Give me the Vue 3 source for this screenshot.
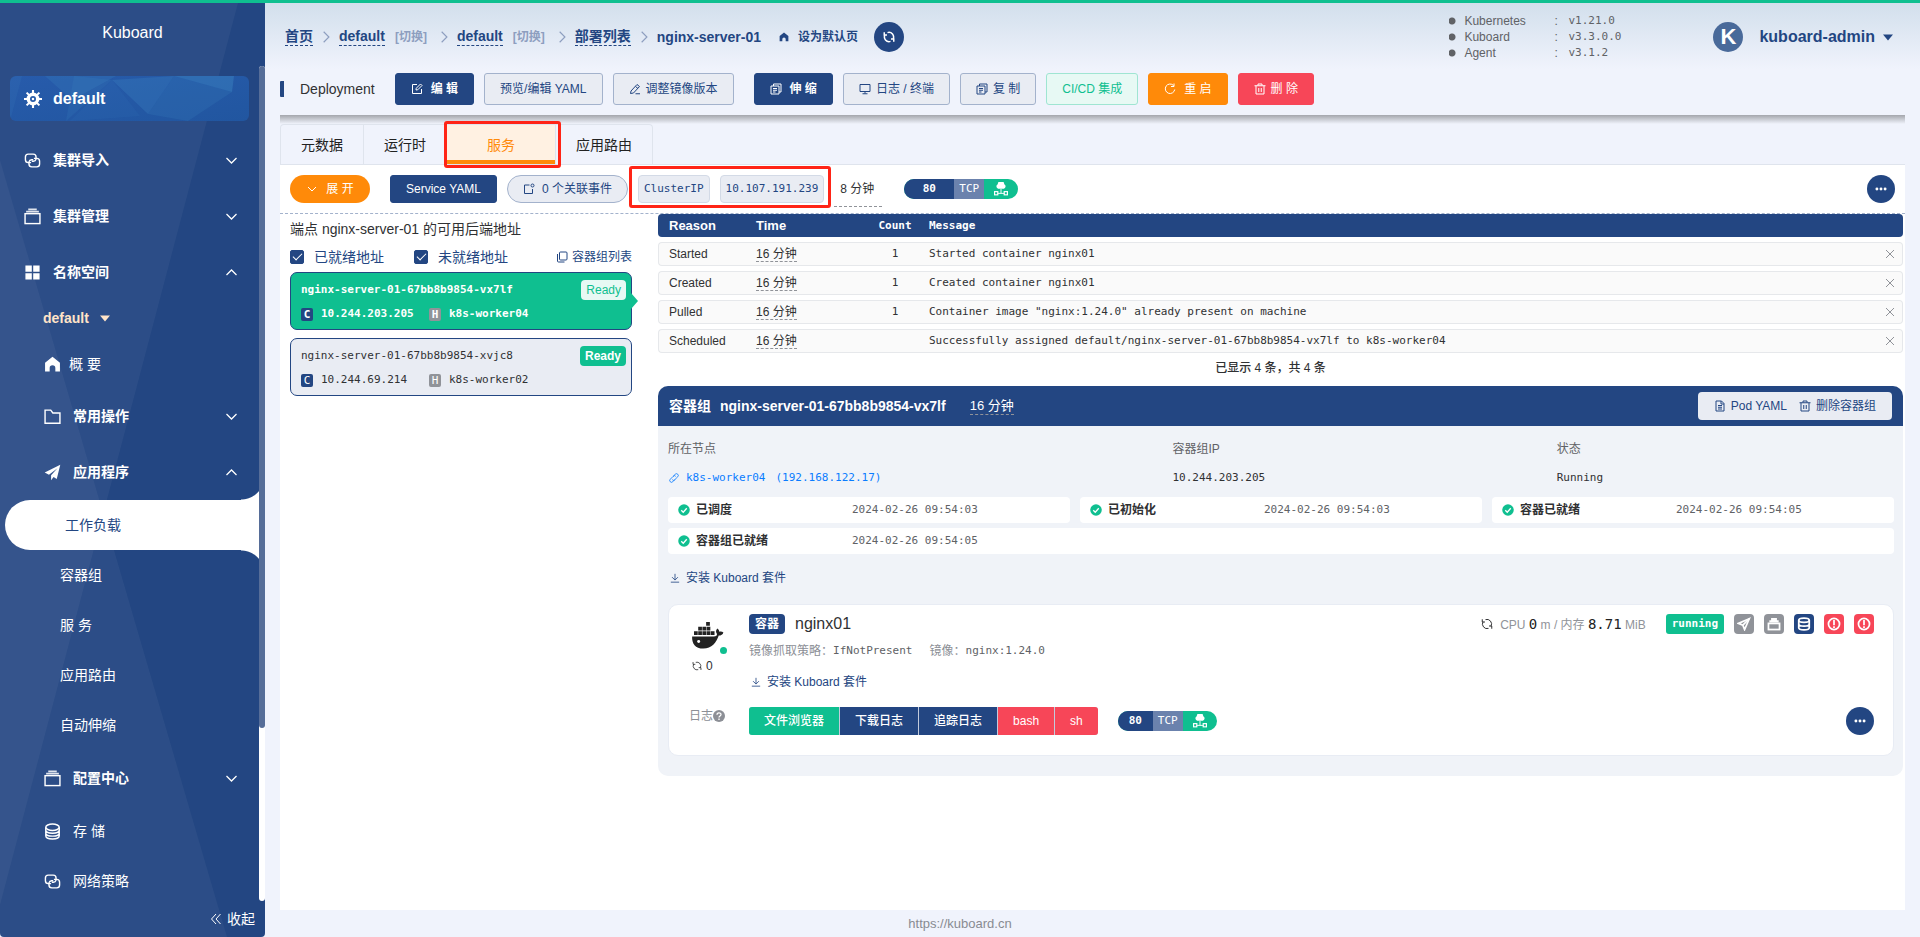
<script setup>
import { h, ref } from 'vue'

const shapes = {
  down: '<path d="M4 8l8 8 8-8"/>',
  up: '<path d="M4 16l8-8 8 8"/>',
  right: '<path d="M8 3l9 9-9 9"/>',
  caret: '<path d="M2 7h20L12 19z" fill="currentColor" stroke="none"/>',
  collapse: '<path d="M12 2L3 12l9 10M21 2l-9 10 9 10"/>',
  helm: '<circle cx="12" cy="12" r="6.300" stroke-width="4.600"/><circle cx="12" cy="12" r="1.700" fill="currentColor" stroke="none"/><path d="M12 0v4M12 20v4M0 12h4M20 12h4M3.500 3.500l3 3M17.500 17.500l3 3M3.500 20.500l3-3M17.500 6.500l3-3" stroke-width="2.800"/>',
  link2: '<path d="M10 15H6a4 4 0 0 1-4-4V7a4 4 0 0 1 4-4h7a4 4 0 0 1 4 4v3a4 4 0 0 1-4 3h-2"/><path d="M14 9h4a4 4 0 0 1 4 4v4a4 4 0 0 1-4 4h-7a4 4 0 0 1-4-4v-3a4 4 0 0 1 4-3h2"/>',
  stack: '<rect x="1.500" y="8" width="21" height="14"/><path d="M3 5.200h18M6 2h12" stroke-width="2.400" opacity=".85"/>',
  grid: '<path d="M2 2h9v9H2zM13 2h9v9h-9zM2 13h9v9H2zM13 13h9v9h-9z" fill="currentColor" stroke="none"/>',
  home: '<path d="M12 1L1.500 9.500V22H8v-5a4 4 0 0 1 8 0v5h6.500V9.500z" fill="currentColor" stroke="none"/>',
  folder: '<path d="M1.500 3h8l3 4h10v14.500h-21z"/>',
  plane: '<path d="M23 1L1 12l6 3L19 6 10 16v7l3.500-4.500L18 21z" fill="currentColor" stroke="none"/>',
  db: '<ellipse cx="12" cy="6" rx="9.500" ry="4.500"/><path d="M2.500 6v12c0 6 19 6 19 0V6M2.500 10c0 6 19 6 19 0M2.500 14c0 6 19 6 19 0"/>',
  dbSmall: '<ellipse cx="12" cy="5.500" rx="9" ry="3.500"/><path d="M3 5.500v13c0 5 18 5 18 0v-13M3 12c0 5 18 5 18 0"/>',
  refresh: '<path d="M9 3.200A9.300 9.300 0 0 1 20 16.500M15 20.800A9.300 9.300 0 0 1 4 7.500M2.500 2.500v5.500h5.500M21.500 21.500V16H16"/>',
  edit: '<path d="M12 3H3v18h18v-9M10 14l.5-3.500L19 2l3 3-8.500 8.500z"/>',
  pen: '<path d="M4 16L16 3l5 4L9 20l-6 1zM13 21.500h9M13 7l5 4"/>',
  copydoc: '<path d="M7 6V2h15v16h-4M2 6h16v16H2zM6 11h8M6 14.500h8M6 18h5"/>',
  monitor: '<path d="M2 3h20v14H2zM12 17v4M7 21.500h10"/>',
  restart: '<path d="M19 5a9.500 9.500 0 1 0 2.500 8M20 1v6h-6"/>',
  trash: '<path d="M1 5.500h22M4 5.500V22h16V5.500M8 5V2h8v3M9.500 10v8M14.500 10v8"/>',
  event: '<path d="M13 4H3v17h16v-9"/><circle cx="19" cy="5" r="3"/>',
  copy: '<rect x="7" y="2" width="15" height="16" rx="2"/><path d="M3 6v14a2 2 0 0 0 2 2h12"/>',
  doc: '<path d="M4 2h11l5 5v15H4zM14 2v6h6M8 11h8M8 14.500h8M8 18h8"/>',
  chain: '<path d="M10 8l5-5a4 4 0 0 1 6 6l-7 7a4 4 0 0 1-6 0M14 16l-5 5a4 4 0 0 1-6-6l7-7a4 4 0 0 1 6 0"/>',
  check: '<circle cx="12" cy="12" r="11.500" fill="#0fbf90" stroke="none"/><path d="M6.500 12.500l4 4 7-8" stroke="#fff" stroke-width="2.600"/>',
  download: '<path d="M12 2v14M5 10l7 7 7-7M2 22h20"/>',
  dots: '<path d="M5 12h.01M12 12h.01M19 12h.01" stroke-width="5" stroke-linecap="round"/>',
  close: '<path d="M4 4l16 16M20 4L4 20"/>',
  warn: '<circle cx="12" cy="12" r="9.500"/><path d="M12 5v9M12 16v3" stroke-width="3"/>',
  send: '<path d="M21 3L2.500 11l7.500 3 3 7.500z" fill="none"/><path d="M21 3L10 14"/>',
  box: '<rect x="2.500" y="11" width="19" height="10.500"/><path d="M4 7.500h16M7 3.500h10" stroke-width="4"/>',
  cloud: '<path d="M7 11.500a4 4 0 0 1-.5-7.500 5.500 5.500 0 0 1 11 0 4 4 0 0 1-.5 7.500z" fill="currentColor" stroke="none"/><path d="M12 12v7.500M6 19.500h12" stroke-width="1.600"/><rect x="1" y="16.500" width="5.500" height="5.500"/><rect x="17.500" y="16.500" width="5.500" height="5.500"/>',
  help: '<circle cx="12" cy="12" r="12" fill="currentColor" stroke="none"/><path d="M8 9.500c0-5 8-5 8-.5 0 3-4 3-4 6M12 17v3" stroke="#fff" stroke-width="2.600"/>',
}
const Icon = (p) =>
  h('svg', { viewBox: '0 0 24 24', class: 'icon', fill: 'none', stroke: 'currentColor', 'stroke-width': 2, 'aria-hidden': 'true', innerHTML: shapes[p.name] })
Icon.props = ['name']

const topMenu = [
  { icon: 'link2', label: '集群导入', arrow: 'down' },
  { icon: 'stack', label: '集群管理', arrow: 'down' },
  { icon: 'grid', label: '名称空间', arrow: 'up' },
]
const workloads = ['工作负载', '容器组', '服 务', '应用路由', '自动伸缩']
const versions = [
  ['Kubernetes', 'v1.21.0'],
  ['Kuboard', 'v3.3.0.0'],
  ['Agent', 'v3.1.2'],
]
const tabs = ['元数据', '运行时', '服务', '应用路由']
const activeTab = ref('服务')
const showReady = ref(true)
const showNotReady = ref(true)
const endpoints = [
  { name: 'nginx-server-01-67bb8b9854-vx7lf', ip: '10.244.203.205', host: 'k8s-worker04' },
  { name: 'nginx-server-01-67bb8b9854-xvjc8', ip: '10.244.69.214', host: 'k8s-worker02' },
]
const selected = ref(0)
const events = [
  { reason: 'Started', time: '16 分钟', count: '1', message: 'Started container nginx01' },
  { reason: 'Created', time: '16 分钟', count: '1', message: 'Created container nginx01' },
  { reason: 'Pulled', time: '16 分钟', count: '1', message: 'Container image "nginx:1.24.0" already present on machine' },
  { reason: 'Scheduled', time: '16 分钟', count: '', message: 'Successfully assigned default/nginx-server-01-67bb8b9854-vx7lf to k8s-worker04' },
]
const conditions = [
  ['已调度', '2024-02-26 09:54:03'],
  ['已初始化', '2024-02-26 09:54:03'],
  ['容器已就绪', '2024-02-26 09:54:05'],
  ['容器组已就绪', '2024-02-26 09:54:05'],
]
</script>

<template>
  <div class="page">
    <aside class="sidebar">
      <svg class="facets" viewBox="0 0 265 934" preserveAspectRatio="none" aria-hidden="true">
        <path d="M0 0H238L0 902Z" fill="#fff" fill-opacity=".045" />
        <path d="M0 157L227 934H0Z" fill="#fff" fill-opacity=".045" />
      </svg>
      <div class="brand">Kuboard</div>
      <div class="menu-wrap">
        <nav class="menu">
          <a class="cluster" href="#">
            <svg class="cluster-bg" viewBox="0 0 239 45" preserveAspectRatio="none" aria-hidden="true">
              <g fill="#4a9ad0">
                <path d="M35 0L62 24L106 0Z" fill-opacity=".16" />
                <path d="M64 0L56 45L102 4Z" fill-opacity=".12" />
                <path d="M102 4L138 38L164 0Z" fill-opacity=".2" />
                <path d="M164 0L222 16L224 0Z" fill-opacity=".3" />
                <path d="M164 0L138 38L178 45L222 16Z" fill-opacity=".14" />
                <path d="M102 4L130 40L60 45Z" fill-opacity=".07" />
                <path d="M0 45L12 0H0Z" fill-opacity=".1" />
              </g>
            </svg>
            <Icon name="helm" class="i18" /><span>default</span>
          </a>
          <button v-for="m in topMenu" :key="m.label" class="item group" type="button">
            <Icon :name="m.icon" class="i17" /><span>{{ m.label }}</span><Icon :name="m.arrow" class="arrow" />
          </button>
          <button class="namespace" type="button">default <Icon name="caret" class="i12" /></button>
          <a class="item sub home" href="#"><Icon name="home" class="i17" /><span>概 要</span></a>
          <button class="item sub group" type="button"><Icon name="folder" class="i17" /><span>常用操作</span><Icon name="down" class="arrow" /></button>
          <button class="item sub group" type="button"><Icon name="plane" class="i17" /><span>应用程序</span><Icon name="up" class="arrow" /></button>
          <a v-for="(w, i) in workloads" :key="w" class="leaf" :class="{ active: i === 0 }" href="#">{{ w }}</a>
          <button class="item sub group" type="button"><Icon name="stack" class="i17" /><span>配置中心</span><Icon name="down" class="arrow" /></button>
          <a class="item sub plain" href="#"><Icon name="db" class="i17" /><span>存 储</span></a>
          <a class="item sub plain" href="#"><Icon name="link2" class="i17" /><span>网络策略</span></a>
        </nav>
        <div class="track"><div class="thumb"></div></div>
      </div>
      <button class="fold" type="button"><Icon name="collapse" class="i12" />收起</button>
    </aside>

    <main class="main">
      <header class="header">
        <nav class="crumbs">
          <a href="#">首页</a><Icon name="right" class="sep" />
          <a href="#">default</a><button class="switch" type="button">[切换]</button><Icon name="right" class="sep" />
          <a href="#">default</a><button class="switch" type="button">[切换]</button><Icon name="right" class="sep" />
          <a href="#">部署列表</a><Icon name="right" class="sep" />
          <strong>nginx-server-01</strong>
          <button class="set-home" type="button"><Icon name="home" class="i10" />设为默认页</button>
          <button class="round large" type="button" aria-label="刷新"><Icon name="refresh" class="i12 heavy" /></button>
        </nav>
        <ul class="versions">
          <li v-for="v in versions" :key="v[0]"><span class="vname">{{ v[0] }}</span><span class="colon">:</span><span class="mono">{{ v[1] }}</span></li>
        </ul>
        <button class="user" type="button"><span class="avatar">K</span>kuboard-admin<Icon name="caret" class="i12" /></button>
      </header>

      <section class="toolbar">
        <h1>Deployment</h1>
        <button class="btn primary wide" type="button"><Icon name="edit" />编 辑</button>
        <button class="btn" type="button">预览/编辑 YAML</button>
        <button class="btn" type="button"><Icon name="pen" />调整镜像版本</button>
        <button class="btn primary wide apart" type="button"><Icon name="copydoc" />伸 缩</button>
        <button class="btn" type="button"><Icon name="monitor" />日志 / 终端</button>
        <button class="btn" type="button"><Icon name="copydoc" />复 制</button>
        <button class="btn success" type="button">CI/CD 集成</button>
        <button class="btn warning wide" type="button"><Icon name="restart" />重 启</button>
        <button class="btn danger" type="button"><Icon name="trash" />删 除</button>
      </section>
      <div class="shade"></div>

      <div class="tabs" role="tablist">
        <div v-for="t in tabs" :key="t" class="tab-cell">
          <button class="tab" :class="{ on: t === activeTab }" type="button" role="tab" :aria-selected="t === activeTab" @click="activeTab = t">{{ t }}</button>
          <span v-if="t === '服务'" class="mark tab-mark"></span>
        </div>
      </div>

      <section class="content">
        <div class="service">
          <button class="expand" type="button"><Icon name="down" />展 开</button>
          <button class="btn primary yaml" type="button">Service YAML</button>
          <button class="btn events-btn" type="button"><Icon name="event" />0 个关联事件</button>
          <div class="tags">
            <span class="tag">ClusterIP</span><span class="tag">10.107.191.239</span>
            <span class="mark tags-mark"></span>
          </div>
          <span class="age">8 分钟</span>
          <div class="pill wide-pill"><b>80</b><span>TCP</span><i><Icon name="cloud" class="i14" /></i></div>
          <button class="round more" type="button" aria-label="更多"><Icon name="dots" class="i14" /></button>
        </div>

        <div class="columns">
          <div class="backends">
            <h2>端点 nginx-server-01 的可用后端地址</h2>
            <div class="filters">
              <label><input v-model="showReady" type="checkbox" />已就绪地址</label>
              <label><input v-model="showNotReady" type="checkbox" />未就绪地址</label>
              <a href="#"><Icon name="copy" class="i12" />容器组列表</a>
            </div>
            <article v-for="(e, i) in endpoints" :key="e.name" class="endpoint" :class="{ chosen: i === selected }" @click="selected = i">
              <div class="ep-row"><span>{{ e.name }}</span><span class="ready">Ready</span></div>
              <div class="ep-row ep-info"><em>C</em><span class="ip">{{ e.ip }}</span><em class="gray">H</em><span>{{ e.host }}</span></div>
            </article>
          </div>

          <div class="detail">
            <table class="events">
              <colgroup><col class="c1" /><col class="c2" /><col class="c3" /><col /><col class="c5" /></colgroup>
              <thead>
                <tr><th>Reason</th><th>Time</th><th class="mono num">Count</th><th class="mono">Message</th><th></th></tr>
              </thead>
              <tbody>
                <tr v-for="e in events" :key="e.reason">
                  <td>{{ e.reason }}</td>
                  <td><span class="dashed">{{ e.time }}</span></td>
                  <td class="mono num">{{ e.count }}</td>
                  <td class="mono">{{ e.message }}</td>
                  <td><button class="x" type="button" aria-label="关闭"><Icon name="close" class="i12" /></button></td>
                </tr>
              </tbody>
            </table>
            <p class="total">已显示 4 条，共 4 条</p>

            <section class="pod">
              <header class="pod-head">
                <b>容器组</b><b>nginx-server-01-67bb8b9854-vx7lf</b><span class="dashed">16 分钟</span>
                <div class="pod-actions">
                  <button type="button"><Icon name="doc" />Pod YAML</button>
                  <button type="button"><Icon name="trash" />删除容器组</button>
                </div>
              </header>
              <div class="pod-body">
                <dl class="facts">
                  <div><dt>所在节点</dt><dd><a href="#"><Icon name="chain" class="i10" /><span>k8s-worker04</span><span>(192.168.122.17)</span></a></dd></div>
                  <div><dt>容器组IP</dt><dd>10.244.203.205</dd></div>
                  <div><dt>状态</dt><dd>Running</dd></div>
                </dl>
                <ul class="conditions">
                  <li v-for="c in conditions" :key="c[0]"><Icon name="check" /><b>{{ c[0] }}</b><span class="mono">{{ c[1] }}</span></li>
                </ul>
                <a class="install" href="#"><Icon name="download" class="i10" />安装 Kuboard 套件</a>

                <article class="container">
                  <div class="gutter">
                    <div class="docker">
                      <svg viewBox="0 0 34 30" fill="#222" aria-hidden="true">
                        <path d="M15 0h4v4h-4zM6.500 5h4v4h-4zM11 5h4v4h-4zM15.500 5h4v4h-4zM2 10h4v4H2zM6.500 10h4v4h-4zM11 10h4v4h-4zM15.500 10h4v4h-4zM20 10h4v4h-4z" />
                        <path d="M0 15.500h23c3 0 4-1.500 3.500-3-1.500-2-1-4 .5-5.500 1.500 1 2 2 2 3.500 1.500-.4 3.500-.2 4.500.7-.7 2.300-2.500 3.300-5 3.300C26 22 21 28.500 12 28.500 3.500 28.500-.5 23 0 15.500z" />
                        <circle cx="7" cy="21" r="1.600" fill="#fff" />
                      </svg>
                      <span class="dot"></span>
                    </div>
                    <div class="restarts"><Icon name="refresh" class="i10" />0</div>
                    <div class="log-label">日志<Icon name="help" /></div>
                  </div>
                  <div class="body">
                    <div class="title-row">
                      <span class="badge">容器</span><span class="cname">nginx01</span>
                      <div class="usage"><Icon name="refresh" /><span>CPU <b>0</b> m / 内存 <b>8.71</b> MiB</span></div>
                      <span class="running">running</span>
                      <span class="sq"><Icon name="send" /></span>
                      <span class="sq"><Icon name="box" /></span>
                      <span class="sq blue"><Icon name="dbSmall" /></span>
                      <span class="sq red"><Icon name="warn" /></span>
                      <span class="sq red"><Icon name="warn" /></span>
                    </div>
                    <div class="meta"><span>镜像抓取策略：</span><span class="mono val">IfNotPresent</span><span>镜像：</span><span class="mono">nginx:1.24.0</span></div>
                    <a class="install inner" href="#"><Icon name="download" class="i10" />安装 Kuboard 套件</a>
                    <div class="actions">
                      <div class="seg">
                        <button class="green" type="button">文件浏览器</button>
                        <button type="button">下载日志</button>
                        <button type="button">追踪日志</button>
                        <button class="red" type="button">bash</button>
                        <button class="red" type="button">sh</button>
                      </div>
                      <div class="pill"><b>80</b><span>TCP</span><i><Icon name="cloud" class="i14" /></i></div>
                      <button class="round more" type="button" aria-label="更多"><Icon name="dots" class="i14" /></button>
                    </div>
                  </div>
                </article>
              </div>
            </section>
          </div>
        </div>
      </section>
      <footer class="foot"><a href="#">https://kuboard.cn</a></footer>
    </main>
  </div>
</template>

<style>
body { margin: 0; }
</style>

<style scoped>
* { box-sizing: border-box; }
.page {
  display: grid;
  grid-template-columns: 265px minmax(0, 1fr);
  min-height: 100vh;
  border-top: 3px solid #0fbf90;
  background: #f0f3fc;
  color: #303133;
  font: 12px/16px "Liberation Sans", "Noto Sans CJK SC", sans-serif;
}
button { font: inherit; color: inherit; background: none; border: 0; padding: 0; cursor: pointer; white-space: nowrap; }
a { color: inherit; text-decoration: none; }
h1, h2, p, ul, dl, dd { margin: 0; padding: 0; font-weight: normal; }
ul { list-style: none; }
.mono { font-family: "DejaVu Sans Mono", "Noto Sans CJK SC", monospace; font-size: 11px; }
.icon { width: 12px; height: 12px; flex: none; display: block; }
.i10 { width: 10px; height: 10px; }
.i14 { width: 14px; height: 14px; }
.i17 { width: 17px; height: 17px; }
.i18 { width: 18px; height: 18px; }
.heavy { stroke-width: 3; }

.sidebar { position: relative; display: flex; flex-direction: column; height: calc(100vh - 3px); background: #234682; color: #fff; border-radius: 0 0 4px 4px; overflow: hidden; }
.facets { position: absolute; inset: 0; width: 100%; height: 100%; }
.brand { position: relative; height: 63px; line-height: 60px; font-size: 16px; text-align: center; flex: none; }
.menu-wrap { position: relative; flex: 1; min-height: 0; display: flex; }
.menu { flex: 1; overflow: hidden; padding-top: 10px; font-size: 14px; margin-right: -6px; }
.track { width: 6px; background: #fff; border-radius: 3px; position: relative; }
.thumb { height: 79.3%; background: #566d98; border-radius: 3px; }
.cluster { position: relative; display: flex; align-items: center; gap: 11px; height: 45px; margin: 0 16px 11px 10px; padding-left: 14px; border-radius: 6px; overflow: hidden; background: linear-gradient(170deg, #275bab, #2156a0); font-size: 16px; font-weight: bold; }
.cluster-bg { position: absolute; inset: 0; width: 100%; height: 100%; }
.cluster .icon, .cluster span { position: relative; }
.item { display: flex; align-items: center; width: 100%; height: 56px; padding: 0 26px 0 24px; gap: 12px; }
.group { font-weight: bold; }
.item .arrow { margin-left: auto; width: 15px; height: 15px; stroke-width: 2; }
.sub { padding-left: 44px; }
.home { height: 48px; gap: 8px; }
.plain { height: 50px; }
.namespace { display: flex; align-items: center; gap: 10px; height: 36px; margin: 0 0 4px 43px; color: #ffe4c8; font-weight: bold; }
.leaf { display: flex; align-items: center; height: 50px; padding-left: 60px; }
.leaf.active { position: relative; margin-left: 5px; background: #fff; color: #234682; border-radius: 25px 0 0 25px; }
.leaf.active::before, .leaf.active::after { content: ""; position: absolute; right: 0; width: 24px; height: 24px; }
.leaf.active::before { bottom: 100%; background: radial-gradient(circle at 0 0, transparent 23px, #fff 24px); }
.leaf.active::after { top: 100%; background: radial-gradient(circle at 0 100%, transparent 23px, #fff 24px); }
.fold { position: relative; display: flex; align-items: center; justify-content: flex-end; gap: 5px; height: 36px; padding-right: 10px; font-size: 14px; flex: none; }

.main { display: flex; flex-direction: column; min-width: 0; padding: 0 15px; background: linear-gradient(#d2dfec, #f0f3fc 66px); }
.header { display: flex; height: 62px; margin-right: -15px; padding: 0 26px 0 5px; }
.crumbs { display: flex; align-items: center; height: 68px; color: #234682; font-size: 14px; font-weight: bold; white-space: nowrap; }
.crumbs a { border-bottom: 1px dashed #234682; line-height: 17px; }
.sep { width: 14px; height: 14px; margin: 0 6px; color: #8d9ebf; }
.switch { font-size: 12px; color: #8d9ebf; margin: 0 4px 0 10px; }
.set-home { display: flex; align-items: center; gap: 9px; font-size: 12px; margin: 0 16px 0 18px; }
.round { display: grid; place-items: center; width: 28px; height: 28px; border-radius: 50%; background: #234682; color: #fff; flex: none; }
.round.large { width: 30px; height: 30px; }
.more { margin-left: auto; }
.versions { margin: 10px 92px 0 auto; width: 172px; color: #606266; flex: none; }
.versions li { display: flex; align-items: center; height: 16px; padding-left: 15px; background: radial-gradient(circle at 3px 8px, #606266 3px, transparent 4px); }
.vname { flex: none; width: 90px; }
.colon { flex: none; width: 14px; }
.user { display: flex; align-items: center; height: 50px; margin-top: 9px; color: #234682; font-size: 16px; font-weight: bold; gap: 7px; }
.avatar { display: grid; place-items: center; width: 30px; height: 30px; margin-right: 9px; border-radius: 50%; background: #496a9a; color: #fff; font-size: 22px; line-height: 30px; }

.toolbar { display: flex; align-items: center; gap: 10px; height: 50px; padding-bottom: 2px; }
.toolbar h1 { font-size: 14px; line-height: 16px; padding-left: 16px; border-left: 4px solid #234682; margin-right: 10px; border-radius: 1px; }
.btn { display: flex; align-items: center; justify-content: center; gap: 5px; height: 32px; padding: 0 15px; border: 1px solid #a3b2cc; border-radius: 3px; background: #e9ecf3; color: #234682; }
.btn.primary { background: #234682; border-color: #234682; color: #fff; font-weight: bold; }
.btn.wide { gap: 8px; }
.btn.apart { margin-left: 10px; }
.btn.success { background: #e7f9f4; border-color: #9fe5d2; color: #0fbf90; }
.btn.warning { background: #ff8a09; border-color: #ff8a09; color: #fff; }
.btn.danger { background: #f74658; border-color: #f74658; color: #fff; }
.shade { height: 9px; background: linear-gradient(#a4a6ac, #f0f3fc); }

.tabs { display: flex; border-bottom: 1px solid #dfe4ed; }
.tab-cell { position: relative; border: 1px solid #dfe4ed; border-width: 1px 1px 0 0; }
.tab-cell:first-child { border-left-width: 1px; border-radius: 4px 0 0 0; }
.tab-cell:last-child { border-radius: 0 4px 0 0; }
.tab { display: block; height: 39px; padding: 0 20px; font-size: 14px; color: #222; }
.tab.on { padding: 4px 40px 0; background: #fff1e2; color: #ff8a09; border-bottom: 4px solid #ff8a09; }
.mark { position: absolute; border: 3px solid #ff2416; border-radius: 3px; pointer-events: none; z-index: 1; }
.tab-mark { inset: -4px -6px -4px -3px; }
.tags-mark { inset: -9px -7px -5px -9px; }

.content { flex: 1; background: #fff; padding-bottom: 20px; }
.service { display: flex; align-items: center; height: 49px; padding: 0 10px; border-bottom: 1px dashed #a3b2cc; }
.service .yaml { height: 28px; margin: 0 10px 0 20px; font-weight: 500; }
.expand { display: flex; align-items: center; justify-content: center; gap: 8px; width: 80px; height: 28px; border-radius: 14px; background: #ff8a09; color: #fff; }
.events-btn { height: 28px; gap: 7px; border-radius: 14px; margin-right: 10px; }
.tags { position: relative; display: flex; gap: 10px; }
.tag { height: 28px; line-height: 26px; padding: 0 5px; border: 1px solid #d3dae6; border-radius: 4px; background: #e9ecf3; color: #234682; font-family: "DejaVu Sans Mono", monospace; font-size: 11px; }
.age { height: 28px; line-height: 20px; margin: 8px 22px 0 10px; padding: 0 8px 0 6px; border-bottom: 1px dashed #909399; }
.pill { display: flex; height: 20px; line-height: 20px; border-radius: 10px; overflow: hidden; color: #fff; background: #0fbf90; font-family: "DejaVu Sans Mono", monospace; font-size: 11px; text-align: center; }
.pill b { width: 35px; background: #234682; }
.pill span { width: 30px; background: #6b82ad; }
.pill i { display: grid; place-items: center; width: 34px; }
.wide-pill b { width: 50px; }

.columns { display: grid; grid-template-columns: 342px minmax(0, 1fr); gap: 26px; padding: 0 2px 0 10px; }
.backends h2 { font-size: 14px; line-height: 20px; padding: 5px 0 6px; }
.filters { display: flex; align-items: center; height: 24px; margin-bottom: 3px; color: #234682; }
.filters label { display: flex; align-items: center; gap: 10px; font-size: 14px; margin-right: 30px; }
.filters a { display: flex; align-items: center; gap: 4px; margin-left: auto; }
.filters input { appearance: none; width: 14px; height: 14px; margin: 0; border: 1px solid #234682; border-radius: 2px; background: #fff; display: grid; place-items: center; }
.filters input:checked { background: #234682; }
.filters input:checked::before { content: ""; width: 8px; height: 4px; margin-bottom: 3px; border: solid #fff; border-width: 0 0 1px 1px; rotate: -45deg; }
.endpoint { position: relative; height: 58px; margin-bottom: 8px; padding: 6px 5px 0 10px; border: 1px solid #234682; border-radius: 7px; background: #e9ecf3; font-family: "DejaVu Sans Mono", monospace; font-size: 11px; cursor: pointer; }
.ep-row { display: flex; align-items: center; justify-content: space-between; height: 22px; }
.ep-info { justify-content: flex-start; height: 26px; }
.ep-info em { width: 12px; height: 13px; line-height: 13px; border-radius: 2px; background: #234682; color: #fff; font-style: normal; text-align: center; margin-right: 8px; }
.ep-info em.gray { background: #909399; }
.ip { width: 108px; }
.ready { height: 20px; line-height: 20px; padding: 0 5px; border-radius: 4px; background: #0fbf90; color: #fff; font-family: "Liberation Sans", sans-serif; font-size: 12px; font-weight: bold; }
.chosen { background: #0fbf90; color: #fff; font-weight: bold; }
.chosen .ready { background: #e7f9f4; color: #0fbf90; font-weight: normal; }
.chosen::after { content: ""; position: absolute; left: 100%; top: 20px; border: 8px solid transparent; border-left: 7px solid #0fbf90; border-right: 0; }

.events { width: 100%; table-layout: fixed; border-collapse: separate; border-spacing: 0 5px; margin: -5px 0 0; }
.c1 { width: 87px; }
.c2 { width: 127px; }
.c3 { width: 46px; }
.c5 { width: 36px; }
.events th { height: 23px; padding: 0 11px; background: #234682; color: #fff; text-align: left; font-size: 13px; }
.events th.mono { font-size: 11px; }
.events .num { text-align: center; padding: 0; }
.events td { height: 24px; padding: 0 11px; background: #fafafa; border: 1px solid #e6e8eb; border-width: 1px 0; }
.events td:first-child { border-left-width: 1px; border-radius: 4px 0 0 4px; padding-left: 10px; }
.events td:last-child { border-right-width: 1px; border-radius: 0 4px 4px 0; padding: 0 6px 0 0; }
.events th:first-child { border-radius: 4px 0 0 4px; }
.events th:last-child { border-radius: 0 4px 4px 0; }
.x { display: block; margin-left: auto; color: #909399; }
.dashed { border-bottom: 1px dashed #909399; }
.total { height: 28px; line-height: 20px; padding-right: 20px; text-align: center; font-weight: 500; }

.pod { border-radius: 10px; background: #f0f3f8; overflow: hidden; }
.pod-head { display: flex; align-items: center; gap: 9px; height: 40px; padding: 0 11px; background: #234682; color: #fff; font-size: 14px; }
.pod-head .dashed { margin-left: 15px; font-size: 13px; }
.pod-actions { display: flex; gap: 12px; height: 28px; margin-left: auto; padding: 0 16px; border-radius: 4px; background: #e9ecf3; color: #234682; font-size: 12px; }
.pod-actions button { display: flex; align-items: center; gap: 5px; }
.pod-body { padding: 14px 9px 20px 10px; }
.facts { display: grid; grid-template-columns: 504fr 384fr 337fr; }
.facts dt { line-height: 18px; color: #606266; }
.facts dd { line-height: 18px; margin: 11px 0 10px; font-family: "DejaVu Sans Mono", monospace; font-size: 11px; }
.facts a { display: flex; align-items: center; gap: 7px; padding-left: 1px; color: #0a7cff; }
.facts a span + span { padding-left: 3px; }
.conditions { display: grid; grid-template-columns: repeat(3, 1fr); gap: 5px 10px; }
.conditions li { display: flex; align-items: center; height: 26px; padding-left: 10px; border-radius: 4px; background: #fff; }
.conditions li:last-child { grid-column: 1 / -1; }
.conditions b { width: 162px; padding-left: 6px; }
.conditions span { color: #606266; }
.install { display: flex; align-items: center; gap: 6px; height: 20px; margin: 14px 0 16px; padding-left: 2px; color: #234682; }
.container { display: flex; border: 1px solid #e8ecf4; border-radius: 10px; background: #fff; padding: 8px 19px 20px 20px; }
.gutter { width: 60px; flex: none; }
.docker { position: relative; width: 36px; height: 32px; margin: 9px 0 0 2px; }
.docker svg { width: 34px; height: 28px; display: block; }
.dot { position: absolute; right: 0; bottom: 0; width: 7px; height: 7px; border-radius: 50%; background: #0fbf90; }
.restarts { display: flex; align-items: center; gap: 4px; height: 20px; margin: 2px 0 30px 3px; }
.log-label { display: flex; align-items: center; height: 20px; color: #8c8f96; }
.body { flex: 1; min-width: 0; }
.title-row { display: flex; align-items: center; gap: 10px; height: 22px; }
.badge { width: 36px; height: 20px; line-height: 20px; border-radius: 4px; background: #234682; color: #fff; text-align: center; font-weight: bold; }
.cname { font-size: 16px; }
.usage { display: flex; align-items: center; gap: 7px; margin: 0 10px 0 auto; }
.usage span { color: #909399; }
.usage b { color: #222; font: 14px "DejaVu Sans Mono", monospace; }
.running { height: 20px; line-height: 20px; padding: 0 6px; border-radius: 3px; background: #0fbf90; color: #fff; font-family: "DejaVu Sans Mono", monospace; font-size: 11px; font-weight: bold; }
.sq { display: grid; place-items: center; width: 20px; height: 20px; border-radius: 4px; background: #909399; color: #fff; }
.sq .icon { width: 14px; height: 14px; stroke-width: 3; }
.sq.blue { background: #234682; }
.sq.red { background: #f74658; }
.meta { display: flex; align-items: center; height: 20px; margin-top: 6px; color: #8c8f96; }
.meta .mono { color: #606266; }
.meta .val { margin-right: 17px; }
.install.inner { margin: 11px 0 15px; }
.actions { display: flex; align-items: center; gap: 20px; }
.seg { display: flex; gap: 1px; border-radius: 3px; overflow: hidden; background: #c2cbdc; }
.seg button { height: 28px; padding: 0 15px; background: #234682; color: #fff; font-weight: 500; }
.seg .green { background: #0fbf90; }
.seg .red { background: #f74658; }
.foot { height: 27px; line-height: 27px; text-align: center; font-size: 13px; color: #888b92; padding-right: 265px; }
</style>
